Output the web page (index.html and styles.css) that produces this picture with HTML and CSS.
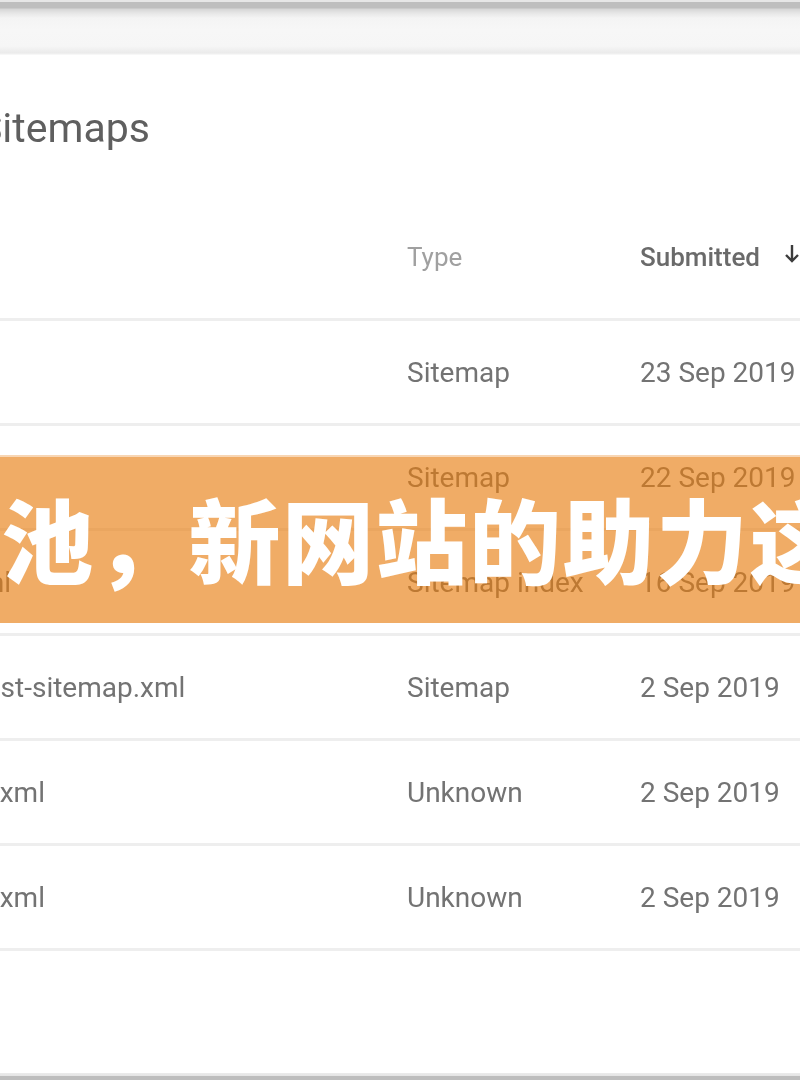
FILE: index.html
```html
<!DOCTYPE html>
<html lang="en">
<head>
<meta charset="utf-8">
<title>Sitemaps</title>
<link rel="stylesheet" href="styles.css">
</head>
<body>
<div class="page">
  <div class="topbar"></div>
  <main class="card">
    <h1 class="title">Sitemaps</h1>
    <div class="table">
      <div class="row head">
        <div class="cell name"></div>
        <div class="cell type">Type</div>
        <div class="cell date sorted">Submitted
          <svg class="arrow" viewBox="0 0 16 20" width="16" height="20" aria-hidden="true"><path d="M8 1v16M2 11l6 6 6-6" fill="none" stroke="#3c3c3c" stroke-width="2.4"/></svg>
        </div>
      </div>
      <div class="row"><div class="cell name">/rss.xml</div><div class="cell type">Sitemap</div><div class="cell date">23 Sep 2019</div></div>
      <div class="row"><div class="cell name">/feed.xml</div><div class="cell type">Sitemap</div><div class="cell date">22 Sep 2019</div></div>
      <div class="row"><div class="cell name">/index.xml</div><div class="cell type">Sitemap index</div><div class="cell date">16 Sep 2019</div></div>
      <div class="row"><div class="cell name">/news/post-sitemap.xml</div><div class="cell type">Sitemap</div><div class="cell date">2 Sep 2019</div></div>
      <div class="row"><div class="cell name">/sitemap.xml</div><div class="cell type">Unknown</div><div class="cell date">2 Sep 2019</div></div>
      <div class="row"><div class="cell name">/sitemap.xml</div><div class="cell type">Unknown</div><div class="cell date">2 Sep 2019</div></div>
    </div>
  </main>
  <div class="banner"><span class="banner-text">蛛池，新网站的助力这</span></div>
  <div class="bottombar"></div>
</div>
</body>
</html>
```

FILE: styles.css
```css
html, body {
  margin: 0;
  padding: 0;
  background: #ffffff;
  overflow: hidden;
}

.page {
  position: relative;
  width: 800px;
  height: 1080px;
  display: flex;
  flex-direction: column;
  overflow: hidden;
  font-family: Roboto, "Liberation Sans", sans-serif;
}

.topbar {
  height: 55px;
  flex: none;
  background: linear-gradient(to bottom,
    #e6e6e6 0px, #e6e6e6 2px,
    #bebebe 2px, #bebebe 8px,
    #d6d6d6 9px, #e6e6e6 13px,
    #f4f4f4 18px, #f7f7f7 30px,
    #f6f6f6 46px, #eeeeee 51px,
    #ebebeb 53px, #fbfbfb 55px);
}

.card {
  margin-left: -120px;
  filter: blur(0.5px);
}

.title {
  margin: 49px 0 0;
  padding-left: 98px;
  font-size: 41px;
  line-height: 48px;
  font-weight: 400;
  color: #5f5f5f;
}

.row {
  display: grid;
  grid-template-columns: 527px 233px 1fr;
  height: 102px;
  align-items: center;
  border-bottom: 3px solid #eeeeee;
  font-size: 28px;
  color: #737373;
  white-space: nowrap;
}

.row.head {
  height: auto;
  padding: 81px 0 37px;
  line-height: 48px;
  font-size: 26px;
}

.head .type {
  color: #a0a0a0;
}

.head .sorted {
  color: #6a6a6a;
  font-weight: 500;
  display: flex;
  align-items: center;
  gap: 24px;
}

.arrow {
  flex: none;
  margin-top: -6px;
}

.name {
  overflow: hidden;
}

.banner {
  position: absolute;
  left: 0;
  top: 455px;
  width: 800px;
  height: 168px;
  background: rgba(231, 125, 16, 0.64);
  display: flex;
  align-items: center;
  overflow: hidden;
  border-top: 2px solid rgba(250, 225, 200, 0.8);
  box-sizing: border-box;
}

.banner-text {
  margin-left: -92px;
  margin-top: -6px;
  font-family: "Noto Sans CJK SC", sans-serif;
  font-weight: 900;
  font-size: 92px;
  line-height: 1;
  letter-spacing: 1.5px;
  color: #ffffff;
  white-space: nowrap;
  filter: blur(0.4px);
}

.bottombar {
  margin-top: auto;
  height: 7px;
  flex: none;
  background: linear-gradient(to bottom, #ebebeb 0px, #e4e4e4 3px, #bdbdbd 3px, #bdbdbd 7px);
}
```
